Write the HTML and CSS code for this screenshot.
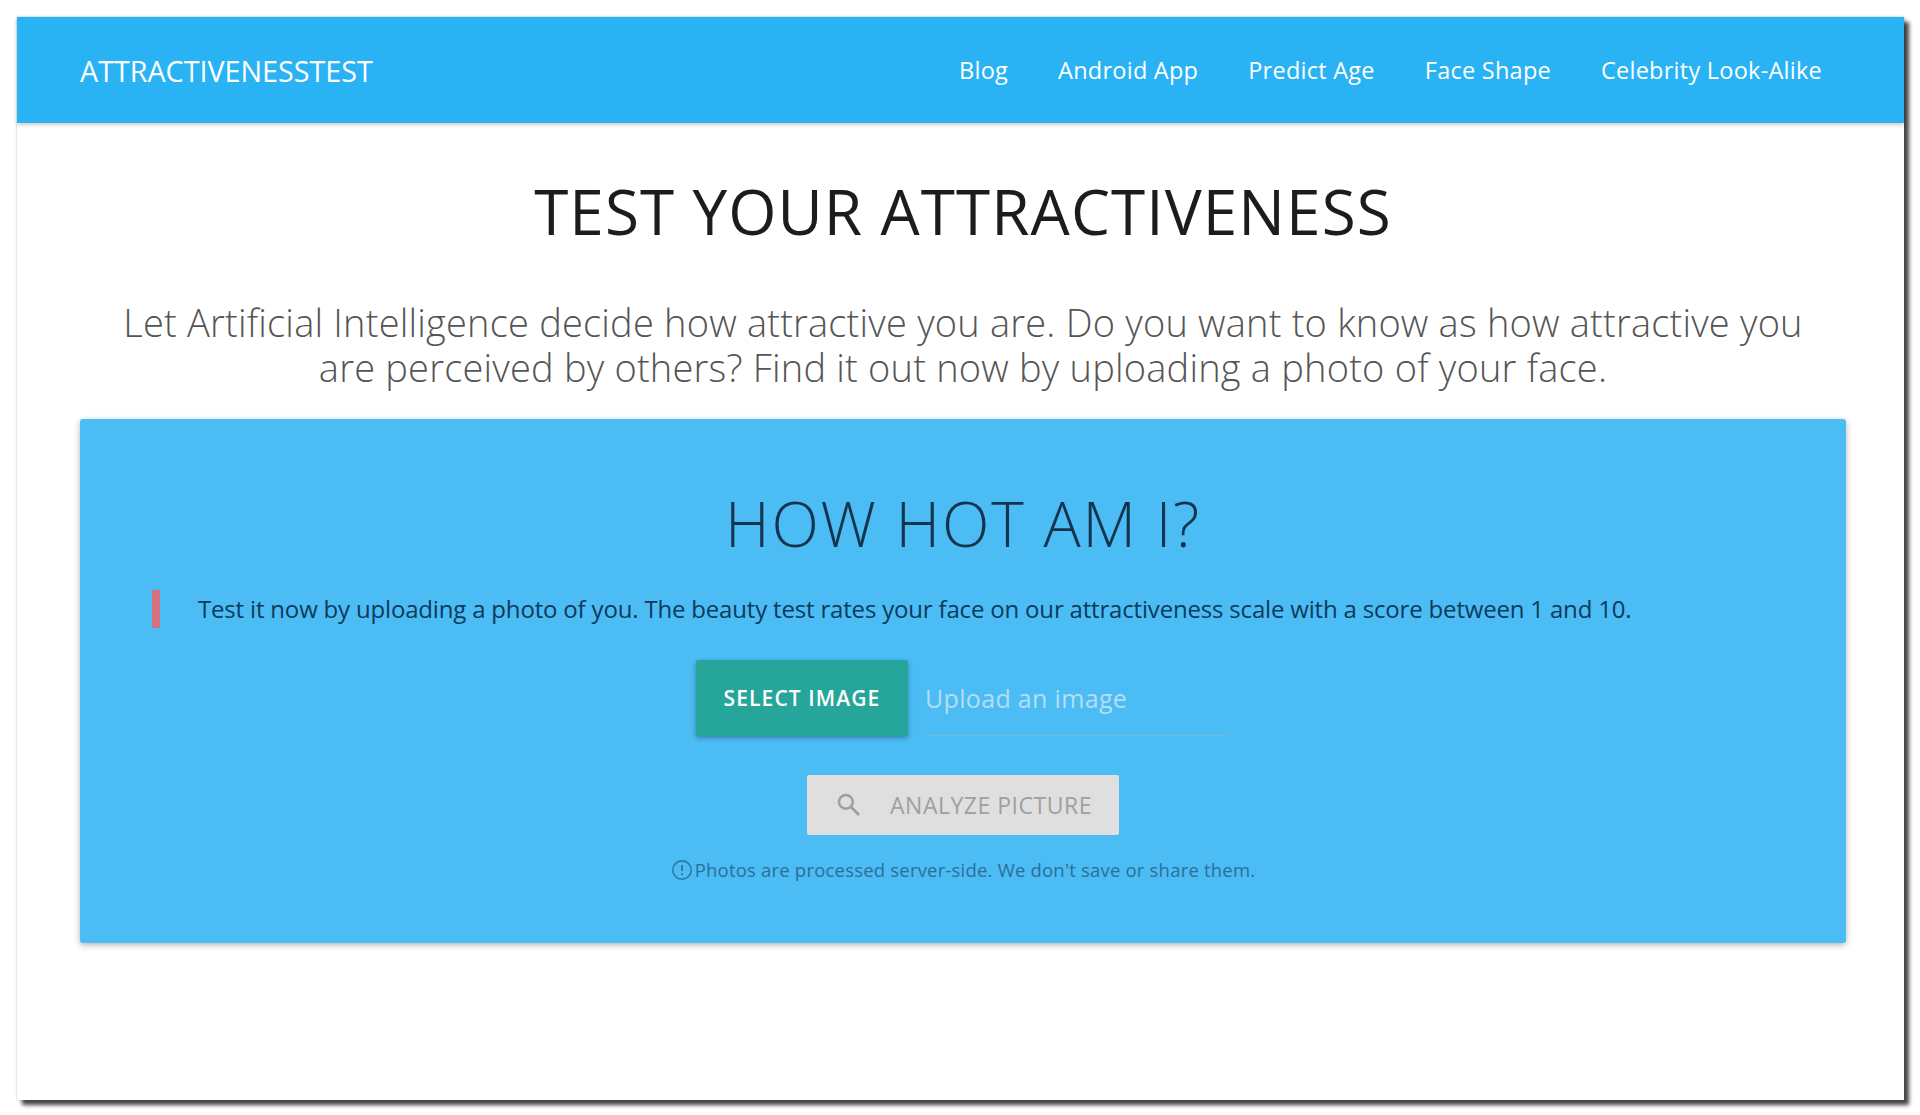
FILE: index.html
```html
<!DOCTYPE html>
<html lang="en">
<head>
    <meta charset="UTF-8">
    <meta name="viewport" content="width=device-width, initial-scale=1.0">
    <title>Attractiveness Test</title>
    <link rel="stylesheet" href="styles.css">
</head>
<body>
    <div class="window">
        <nav class="navbar">
            <a class="brand" href="#">ATTRACTIVENESSTEST</a>
            <ul class="nav-links">
                <li><a href="#">Blog</a></li>
                <li><a href="#">Android App</a></li>
                <li><a href="#">Predict Age</a></li>
                <li><a href="#">Face Shape</a></li>
                <li><a href="#">Celebrity Look-Alike</a></li>
            </ul>
        </nav>
        <main class="content">
            <h1 class="title">TEST YOUR ATTRACTIVENESS</h1>
            <p class="lead">Let Artificial Intelligence decide how attractive you are. Do you want to know as how attractive you are perceived by others? Find it out now by uploading a photo of your face.</p>
            <section class="card">
                <h2 class="card-title">HOW HOT AM I?</h2>
                <blockquote class="quote">Test it now by uploading a photo of you. The beauty test rates your face on our attractiveness scale with a score between 1 and 10.</blockquote>
                <div class="file-row">
                    <button type="button" class="select-btn">SELECT IMAGE</button>
                    <div class="file-path">Upload an image</div>
                </div>
                <button type="button" class="analyze-btn">
                    <svg class="search-icon" viewBox="0 0 24 24" width="30" height="30"><circle cx="9.5" cy="9.5" r="5.5" fill="none" stroke="currentColor" stroke-width="2"/><path d="M13.6 13.6 L20 20" fill="none" stroke="currentColor" stroke-width="2.2"/></svg>
                    <span>ANALYZE PICTURE</span>
                </button>
                <p class="note">
                    <svg class="info-icon" viewBox="0 0 20 20" width="22" height="22"><circle cx="10" cy="10" r="8.4" fill="none" stroke="currentColor" stroke-width="1.2"/><path d="M10 5.5 V11 M10 13 V14.6" fill="none" stroke="currentColor" stroke-width="1.5"/></svg>
                    Photos are processed server-side. We don't save or share them.
                </p>
            </section>
        </main>
    </div>
</body>
</html>
```

FILE: styles.css
```css
html, body {
    height: 100%;
}
body {
    margin: 0;
    padding: 17px 16px 15px 17px;
    box-sizing: border-box;
    background-color: #fff;
    font-family: "Open Sans", "Noto Sans", sans-serif;
}
.window {
    height: 1083px;
    background-color: #fff;
    box-shadow: 5px 5px 4px #444, 0 0 2px #bbb;
}
.navbar {
    height: 106px;
    padding: 0 82px 0 63px;
    display: flex;
    align-items: center;
    justify-content: space-between;
    background-color: #29b3f4;
    box-shadow: 0 2px 4px rgba(0, 0, 0, 0.2);
}
.brand {
    color: #fff;
    font-size: 28.7px;
    text-decoration: none;
}
.nav-links {
    display: flex;
    gap: 50px;
    margin: 0;
    padding: 0;
    list-style: none;
}
.nav-links a {
    color: #fff;
    font-size: 23.5px;
    letter-spacing: 0.25px;
    text-decoration: none;
}
.content {
    padding: 0 58px 0 63px;
}
.title {
    margin: 0;
    padding-top: 49px;
    text-align: center;
    color: #1c1c1c;
    font-size: 62px;
    line-height: 78px;
    font-weight: 400;
    letter-spacing: 1.1px;
}
.lead {
    margin: 50px 0 0;
    padding: 0 20px;
    text-align: center;
    color: #555;
    font-size: 38px;
    line-height: 45px;
    font-weight: 300;
    letter-spacing: 0.2px;
}
.card {
    margin-top: 29px;
    height: 524px;
    padding: 68px 72px 0;
    box-sizing: border-box;
    display: flex;
    flex-direction: column;
    align-items: center;
    background-color: #4bbcf4;
    border-radius: 3px;
    box-shadow: 0 2px 6px rgba(0, 0, 0, 0.3);
}
.card-title {
    margin: 0;
    color: #14344d;
    font-size: 62px;
    line-height: 72px;
    font-weight: 300;
    letter-spacing: 1.8px;
}
.quote {
    align-self: stretch;
    margin: 31px 0 0;
    padding-left: 38px;
    border-left: 8px solid #d6707c;
    color: #0d3a5c;
    font-size: 24px;
    line-height: 38px;
    letter-spacing: -0.18px;
}
.file-row {
    display: flex;
    align-items: stretch;
    margin-top: 32px;
    margin-left: -2px;
    gap: 17px;
}
.select-btn {
    width: 212px;
    height: 76px;
    border: 0;
    border-radius: 2px;
    background-color: #26a69a;
    color: #fff;
    font-family: inherit;
    font-size: 21px;
    font-weight: 600;
    letter-spacing: 1.1px;
    box-shadow: 0 2px 5px rgba(0, 0, 0, 0.3);
}
.file-path {
    width: 303px;
    display: flex;
    align-items: center;
    border-bottom: 1px solid #7fb5d3;
    color: #b5def5;
    font-size: 25px;
    letter-spacing: 0.33px;
}
.analyze-btn {
    width: 312px;
    height: 60px;
    margin-top: 39px;
    display: flex;
    align-items: center;
    justify-content: center;
    gap: 26px;
    border: 0;
    border-radius: 2px;
    background-color: #dfdfdf;
    color: #9f9f9f;
    font-family: inherit;
    font-size: 23px;
    letter-spacing: 0.5px;
}
.note {
    display: flex;
    align-items: center;
    gap: 2px;
    margin: 23px 0 0;
    color: #2b6f99;
    font-size: 18.5px;
    line-height: 24px;
    letter-spacing: 0.2px;
}
```
